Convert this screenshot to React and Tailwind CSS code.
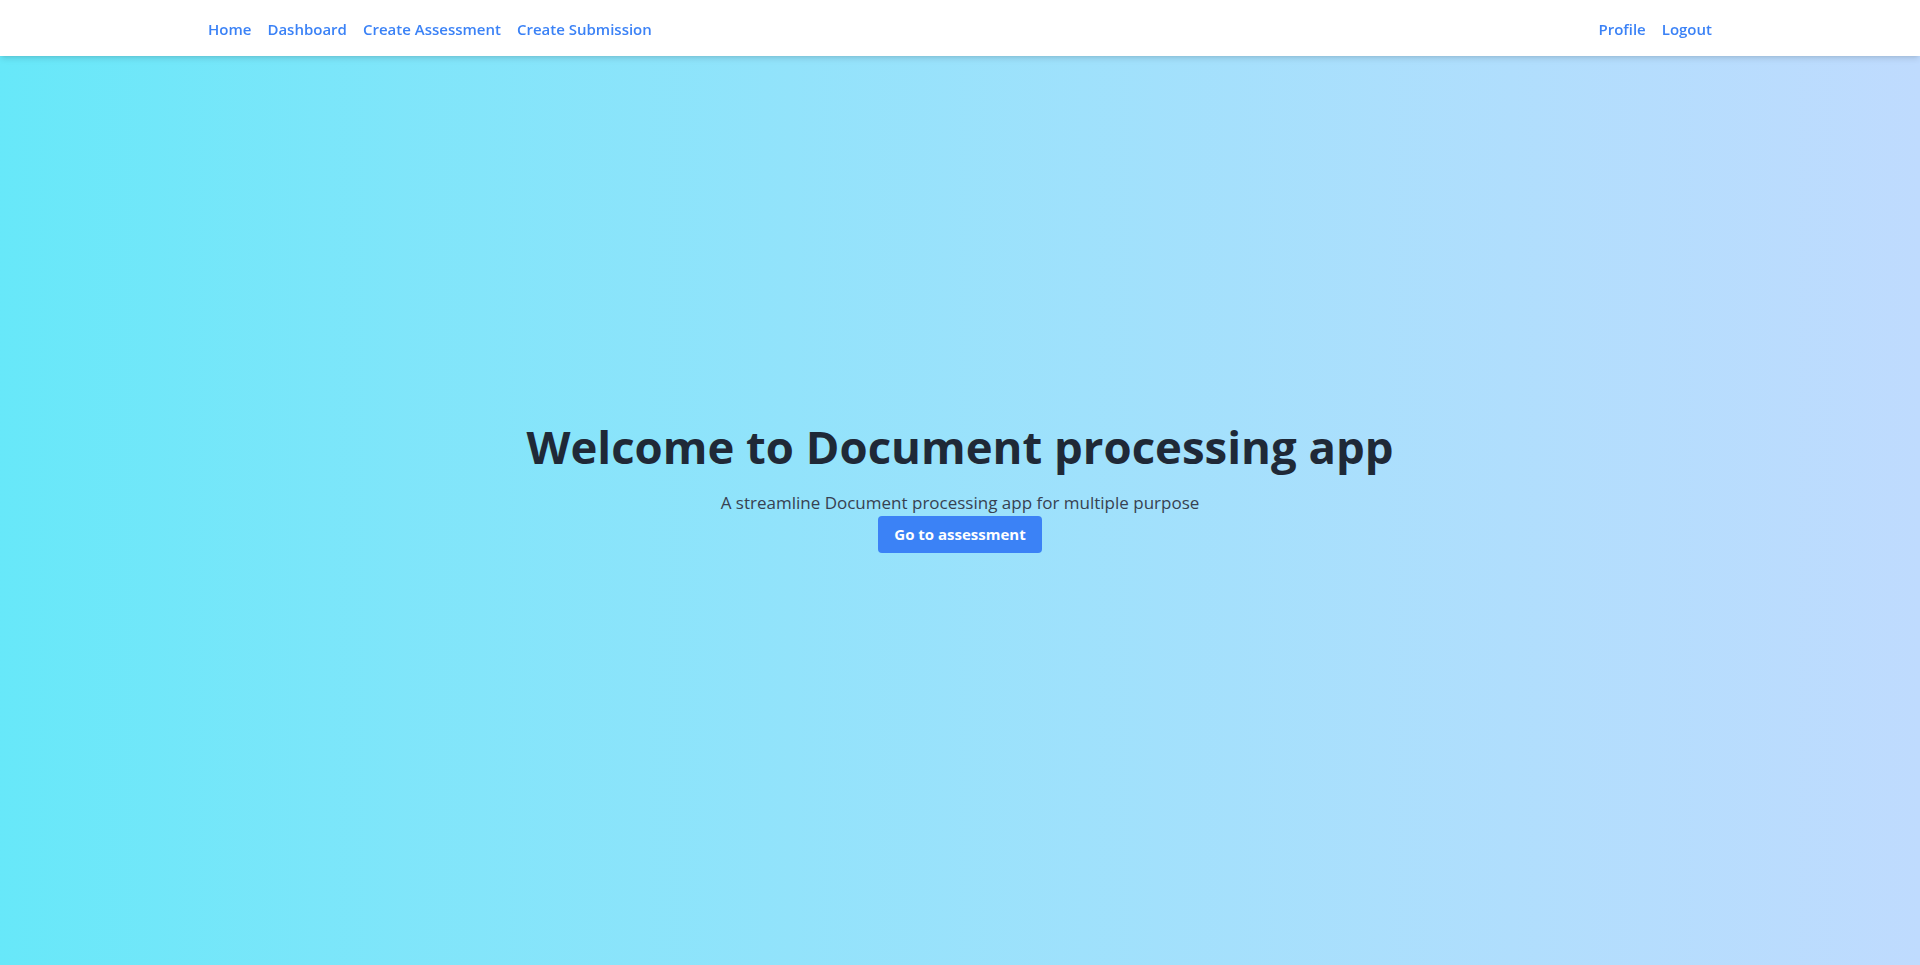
import React from 'react';

const font = { fontFamily: '"Open Sans", "Noto Sans", sans-serif' };

function NavBar() {
  return (
    <header className="fixed top-0 left-0 right-0 z-10 h-[56px] bg-white shadow-md">
      <nav className="container mx-auto px-4 h-full flex items-center justify-between pt-[3px]">
        <div className="flex items-center gap-4 text-[#3b82f6] font-semibold text-[15px]">
          <a href="#">Home</a>
          <a href="#">Dashboard</a>
          <a href="#">Create Assessment</a>
          <a href="#">Create Submission</a>
        </div>
        <div className="flex items-center gap-4 text-[#3b82f6] font-semibold text-[15px]">
          <a href="#">Profile</a>
          <a href="#">Logout</a>
        </div>
      </nav>
    </header>
  );
}

export default function App() {
  return (
    <div className="min-h-screen" style={font}>
      <NavBar />
      <main className="h-screen pt-[9px] bg-gradient-to-r from-[#67e8f9] to-[#bfdbfe] flex flex-col items-center justify-center text-center">
        <h1 className="text-[45.5px] font-bold text-[#1f2937] leading-[48px] mb-[20px]">
          Welcome to Document processing app
        </h1>
        <p className="text-[17px] leading-[26px] text-[#374151]">
          A streamline Document processing app for multiple purpose
        </p>
        <button className="h-[37px] px-4 rounded bg-[#3b82f6] text-white font-bold text-[15px]">
          Go to assessment
        </button>
      </main>
    </div>
  );
}
